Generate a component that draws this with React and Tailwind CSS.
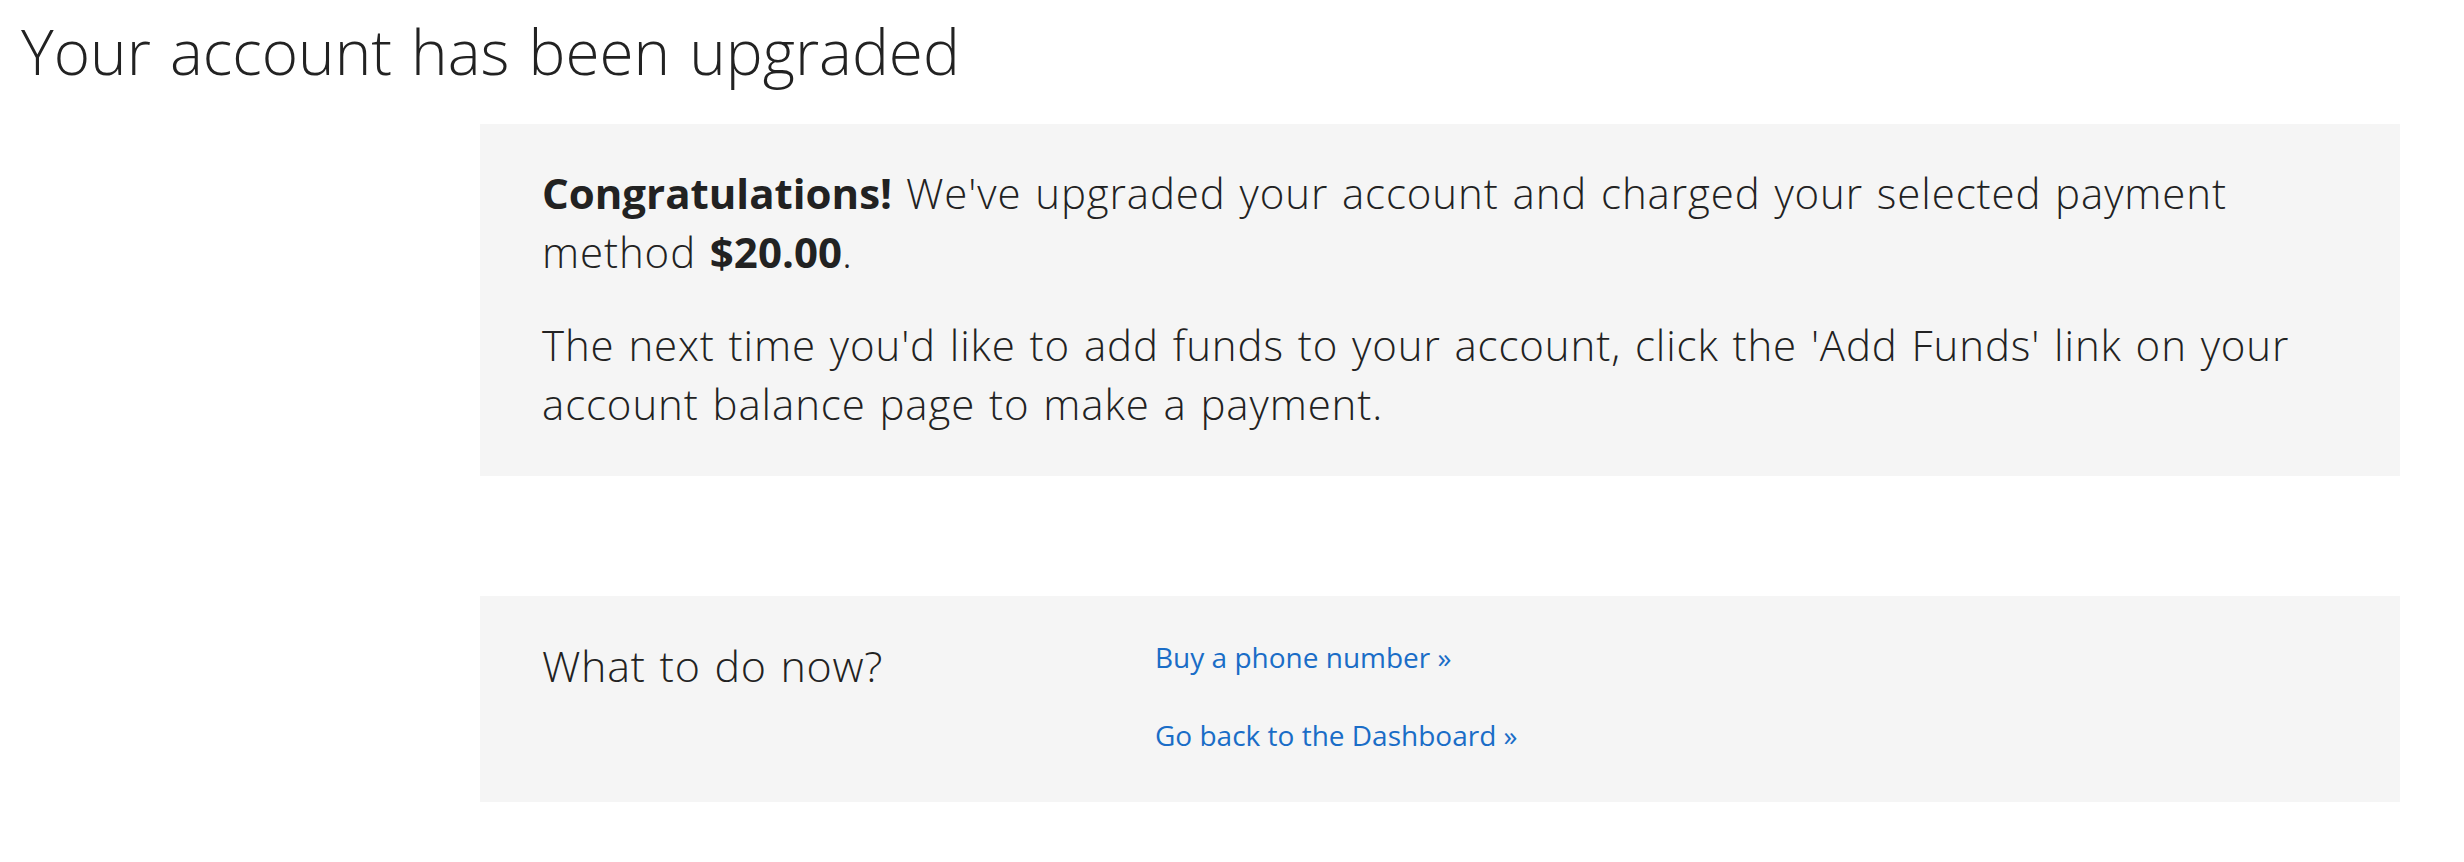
export default function App() {
  const font = { fontFamily: '"Open Sans", "Lato", sans-serif' };
  return (
    <div className="min-h-[862px] w-[2464px] bg-white text-[#222222]" style={font}>
      <h1 className="pl-[21px] pt-[11px] text-[62px] leading-[80px] font-light [word-spacing:3px]">
        Your account has been upgraded
      </h1>
      <div className="ml-[480px] mt-[33px] w-[1920px]">
        <div className="bg-[#f5f5f5] pl-[62px] pr-[62px] pt-[39px] pb-[43px] text-[42px] leading-[59px] font-light tracking-[0.9px] [word-spacing:2px]">
          <p className="mb-[34px]">
            <span className="font-bold tracking-[0px]">Congratulations!</span> We've upgraded your account and charged
            your selected payment method <span className="font-bold tracking-[0px]">$20.00</span>.
          </p>
          <p>
            The next time you'd like to add funds to your account, click the 'Add Funds' link on your account balance
            page to make a payment.
          </p>
        </div>
        <div className="mt-[120px] flex h-[206px] bg-[#f5f5f5] pl-[62px] pt-[40px]">
          <div className="w-[613px] text-[43px] leading-[60px] font-light tracking-[0.7px] [word-spacing:2px]">
            What to do now?
          </div>
          <div className="flex flex-col gap-[40px] pt-[2px] text-[28px] leading-[38px] text-[#1a6dc7]">
            <a href="#">Buy a phone number »</a>
            <a href="#">Go back to the Dashboard »</a>
          </div>
        </div>
      </div>
    </div>
  );
}
